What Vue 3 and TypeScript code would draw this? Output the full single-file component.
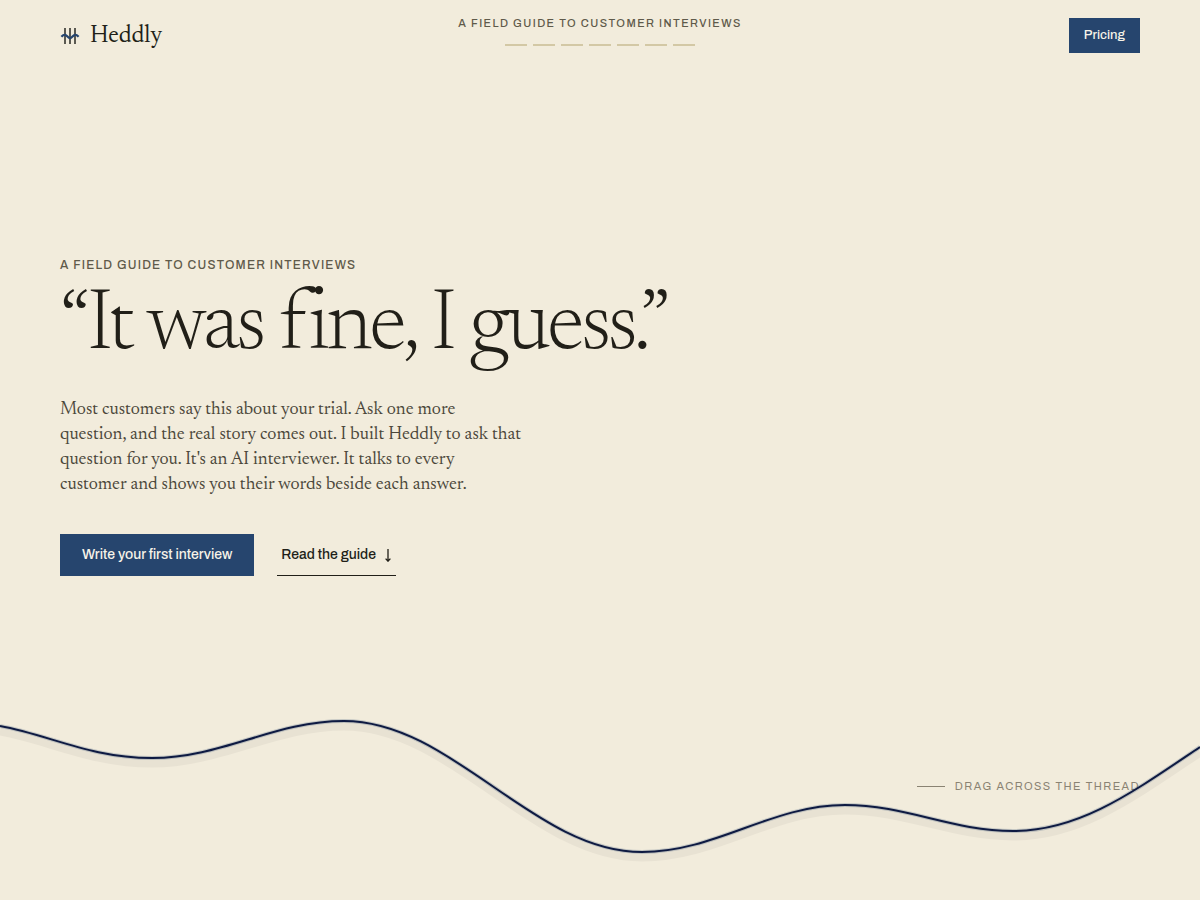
<script setup lang="ts">
const guideTitle = 'A field guide to customer interviews'
const chapters: number[] = [1, 2, 3, 4, 5, 6, 7]
const threadPath =
  'M0 26C50 35 90 58 152 58C222 58 274 21 344 21C452 21 534 152 642 152' +
  'C716 152 771 105 845 105C906 105 952 131 1013 131C1080 131 1133 92 1200 47'
</script>

<template>
  <div class="page">
    <header class="bar">
      <a class="brand" href="#top">
        <svg class="mark" viewBox="0 0 20 20" aria-hidden="true">
          <path d="M5 1V17M10 1V17M15 1V17" stroke="#4b4a43" stroke-width="1.8" fill="none" />
          <path
            d="M1.4 9.8C3 8 4 7.6 5.2 7.8C7.2 8.2 8 11.2 10 11.2C12 11.2 12.8 8.2 14.8 7.8C16 7.6 17 8 18.6 9.8"
            stroke="#26456e"
            stroke-width="2.2"
            fill="none"
          />
        </svg>
        <span>Heddly</span>
      </a>
      <div class="progress">
        <span class="progress-title">{{ guideTitle }}</span>
        <div class="dashes" aria-hidden="true">
          <i v-for="chapter in chapters" :key="chapter"></i>
        </div>
      </div>
      <a class="pricing" href="#pricing">Pricing</a>
    </header>

    <main id="top" class="hero">
      <p class="eyebrow">{{ guideTitle }}</p>
      <h1>“It was fine, I guess.”</h1>
      <p class="lede">
        Most customers say this about your trial. Ask one more question, and the real story comes
        out. I built Heddly to ask that question for you. It's an AI interviewer. It talks to every
        customer and shows you their words beside each answer.
      </p>
      <div class="actions">
        <a class="primary" href="#start">Write your first interview</a>
        <a class="secondary" href="#guide">
          <span>Read the guide</span>
          <svg class="arrow" viewBox="0 0 8 14" aria-hidden="true">
            <path d="M4 1V13M1.6 10.6L4 13.2L6.4 10.6" fill="none" stroke="#211f18" stroke-width="1.3" />
          </svg>
        </a>
      </div>
    </main>

    <p class="hint">Drag across the thread</p>

    <svg class="thread" viewBox="0 0 1200 200" preserveAspectRatio="none" aria-hidden="true">
      <path class="shade" :d="threadPath" transform="translate(0 5)" />
      <path class="halo" :d="threadPath" />
      <path class="strand" :d="threadPath" />
    </svg>
  </div>
</template>

<style>
body {
  margin: 0;
  background: #f2ecdc;
}
</style>

<style scoped>
.page {
  position: relative;
  display: flex;
  flex-direction: column;
  box-sizing: border-box;
  min-height: 100vh;
  overflow: hidden;
  background: #f2ecdc;
  color: #211f18;
  font-family: Archivo, "Liberation Sans", Arial, sans-serif;
  font-weight: 500;
}
a {
  color: inherit;
  text-decoration: none;
}
p,
h1 {
  margin: 0;
}
.bar {
  display: grid;
  grid-template-columns: 1fr auto 1fr;
  align-items: start;
  height: 35px;
  padding: 18px 60px;
}
.brand {
  display: flex;
  align-items: center;
  gap: 10px;
  font-family: Newsreader, "Liberation Serif", serif;
  font-size: 24px;
  font-weight: 400;
  line-height: 37px;
}
.mark {
  width: 20px;
  height: 20px;
}
.progress {
  display: flex;
  flex-direction: column;
  align-items: center;
  gap: 15px;
}
.progress-title,
.eyebrow,
.hint {
  text-transform: uppercase;
  letter-spacing: 0.13em;
  font-size: 11px;
  line-height: 11px;
}
.progress-title {
  color: #5f5a4a;
}
.dashes {
  display: flex;
  gap: 6px;
}
.dashes i {
  width: 22px;
  height: 2px;
  background: #d3c8a5;
}
.pricing {
  justify-self: end;
  padding: 0 15px;
  background: #26456e;
  color: #f7f3e8;
  font-size: 13px;
  line-height: 35px;
}
.hero {
  padding: 187px 60px 0;
}
.eyebrow {
  font-size: 12px;
  line-height: 14px;
  letter-spacing: 0.1em;
  color: #5f5a4a;
}
h1 {
  margin-top: 14px;
  font-family: Newsreader, "Liberation Serif", serif;
  font-size: 86px;
  font-weight: 300;
  line-height: 84px;
  letter-spacing: -3px;
}
.lede {
  max-width: 462px;
  margin-top: 28px;
  font-family: Newsreader, "Liberation Serif", serif;
  font-size: 18px;
  font-weight: 400;
  line-height: 25px;
  color: #4b473a;
}
.actions {
  display: flex;
  gap: 23px;
  margin-top: 36px;
  font-size: 14px;
  line-height: 42px;
}
.primary {
  padding: 0 22px;
  background: #26456e;
  color: #f7f3e8;
}
.secondary {
  display: flex;
  align-items: center;
  gap: 8px;
  box-sizing: border-box;
  height: 42px;
  padding: 0 4px;
  border-bottom: 1px solid #211f18;
}
.arrow {
  width: 8px;
  height: 14px;
}
.hint {
  display: flex;
  align-items: center;
  justify-content: flex-end;
  gap: 10px;
  margin-top: auto;
  padding: 0 60px 108px;
  font-weight: 400;
  color: #8a8373;
}
.hint::before {
  content: "";
  width: 28px;
  height: 1px;
  background: #8a8373;
}
.thread {
  position: absolute;
  left: 0;
  bottom: 0;
  width: 100%;
  height: 200px;
  pointer-events: none;
}
.thread path {
  fill: none;
}
.shade {
  stroke: #e8e2d3;
  stroke-width: 9;
}
.halo {
  stroke: #26456e;
  stroke-opacity: 0.22;
  stroke-width: 4;
}
.strand {
  stroke: #0e1a42;
  stroke-width: 2;
}
</style>
